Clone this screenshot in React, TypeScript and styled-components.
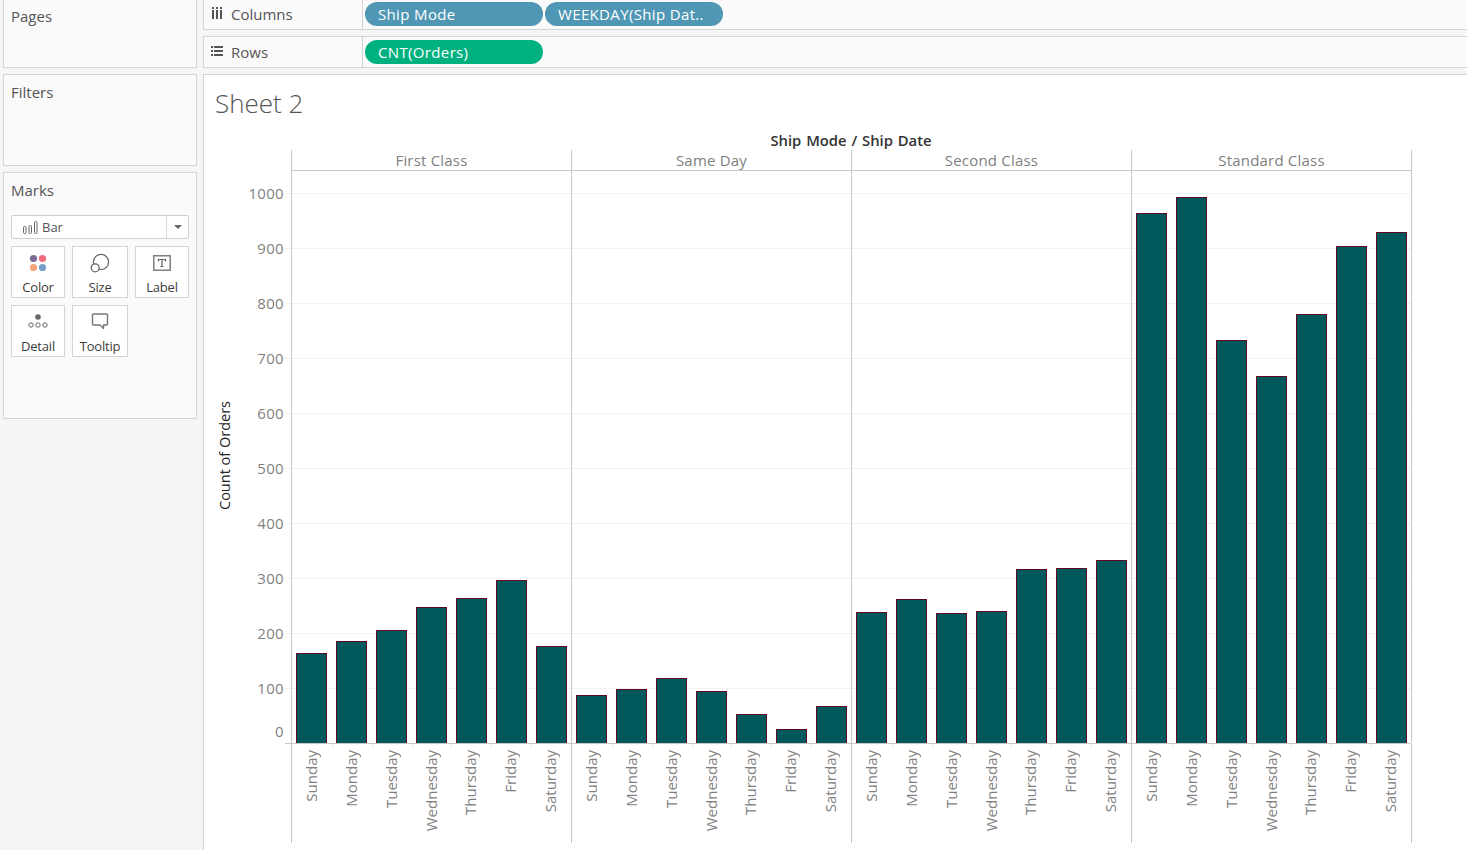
import React from "react";
import styled, { createGlobalStyle } from "styled-components";

const GlobalStyle = createGlobalStyle`
  html, body {
    margin: 0;
    padding: 0;
    height: 850px;
    overflow: hidden;
    background: #f5f5f5;
    font-family: "Open Sans", "Liberation Sans", sans-serif;
  }
`;

const Page = styled.div`
  display: grid;
  grid-template-columns: 194px 1fr;
  column-gap: 6px;
  width: 1467px;
  height: 850px;
  padding-left: 3px;
  box-sizing: border-box;
  overflow: hidden;
`;

const Side = styled.div`
  display: flex;
  flex-direction: column;
  gap: 6px;
  margin-top: -2px;
`;

const Card = styled.div<{ $h: number }>`
  height: ${(p) => p.$h}px;
  box-sizing: border-box;
  background: #fafafa;
  border: 1px solid #d4d4d4;
  padding: 7px 7px;
  font-size: 15px;
  line-height: 20px;
  color: #555;
`;

const MarkSelect = styled.div`
  display: flex;
  align-items: center;
  height: 24px;
  margin-top: 15px;
  box-sizing: border-box;
  background: #fff;
  border: 1px solid #cfcfcf;
  border-radius: 2px;
  font-size: 13px;
`;

const MarkName = styled.div`
  flex: 1;
  display: flex;
  align-items: center;
  gap: 4px;
  padding-left: 11px;
  border-right: 1px solid #d8d8d8;
  height: 100%;
`;

const Caret = styled.div`
  width: 21px;
  display: flex;
  justify-content: center;
  &::after {
    content: "";
    border-left: 4px solid transparent;
    border-right: 4px solid transparent;
    border-top: 4px solid #666;
  }
`;

const MarkGrid = styled.div`
  display: grid;
  grid-template-columns: 54px 56px 54px;
  grid-auto-rows: 52px;
  column-gap: 7px;
  row-gap: 7px;
  margin-top: 7px;
`;

const MarkButton = styled.div`
  display: flex;
  flex-direction: column;
  align-items: center;
  box-sizing: border-box;
  background: #fff;
  border: 1px solid #d4d4d4;
  font-size: 13px;
  line-height: 18px;
  color: #3c3c3c;
  letter-spacing: -0.2px;
`;

const IconSlot = styled.div`
  height: 31px;
  display: flex;
  align-items: center;
  justify-content: center;
`;

const Main = styled.div`
  display: flex;
  flex-direction: column;
  gap: 6px;
  margin-top: -2px;
  min-width: 0;
`;

const Shelf = styled.div<{ $h: number }>`
  display: flex;
  height: ${(p) => p.$h}px;
  box-sizing: border-box;
  background: #fafafa;
  border: 1px solid #d4d4d4;
  border-right: none;
`;

const ShelfLabel = styled.div`
  width: 159px;
  flex: none;
  display: flex;
  align-items: center;
  gap: 8px;
  box-sizing: border-box;
  padding: 0 0 0 7px;
  border-right: 1px solid #d4d4d4;
  font-size: 15px;
  color: #555;
`;

const ShelfIcon = styled.svg`
  width: 12px;
  height: 12px;
  margin-top: -3px;
`;

const Pills = styled.div`
  display: flex;
  align-items: center;
  gap: 2px;
  padding-left: 2px;
`;

const Pill = styled.div<{ $bg: string }>`
  width: 178px;
  height: 24px;
  box-sizing: border-box;
  padding-left: 13px;
  border-radius: 12px;
  background: ${(p) => p.$bg};
  color: #fff;
  font-size: 15px;
  letter-spacing: 0.35px;
  line-height: 24px;
  white-space: nowrap;
`;

const View = styled.div`
  flex: 1;
  display: flex;
  flex-direction: column;
  box-sizing: border-box;
  background: #fff;
  border: 1px solid #d4d4d4;
  border-right: none;
  border-bottom: none;
`;

const Title = styled.div`
  padding: 10px 0 0 11px;
  height: 47px;
  box-sizing: border-box;
  font-size: 26px;
  line-height: 36px;
  font-weight: 300;
  color: #555;
`;

const Chart = styled.div`
  display: grid;
  grid-template-columns: 87px 1120px;
  grid-template-rows: 28px 21px 573px 99px;
`;

const AxisTitleSlot = styled.div`
  display: flex;
  justify-content: center;
  align-items: center;
  width: 40px;
  height: 100%;
  padding-bottom: 4px;
  box-sizing: border-box;
`;

const AxisTitle = styled.div`
  transform: rotate(-90deg);
  white-space: nowrap;
  font-size: 14.5px;
  font-weight: 500;
  color: #222;
`;

const ChartTitle = styled.div`
  grid-column: 2;
  grid-row: 1;
  text-align: center;
  padding-top: 8px;
  font-size: 14.8px;
  line-height: 20px;
  font-weight: 600;
  color: #333;
  word-spacing: 1px;
`;

const Headers = styled.div`
  grid-column: 2;
  grid-row: 2;
  display: grid;
  grid-template-columns: repeat(4, 280px);
  border-bottom: 1px solid #c8c8c8;
`;

const HeaderCell = styled.div`
  border-left: 1px solid #c8c8c8;
  text-align: center;
  font-size: 15px;
  letter-spacing: 0.2px;
  line-height: 21px;
  color: #7f7f7f;
  &:last-child {
    border-right: 1px solid #c8c8c8;
    margin-right: -1px;
  }
`;

const AxisColumn = styled.div`
  grid-column: 1;
  grid-row: 3;
  position: relative;
`;

const Tick = styled.div<{ $y: number }>`
  position: absolute;
  right: 7px;
  top: ${(p) => p.$y - 10}px;
  font-size: 15px;
  letter-spacing: 0.3px;
  line-height: 20px;
  color: #7f7f7f;
`;

const TickMark = styled.div<{ $y: number; $base?: boolean }>`
  position: absolute;
  right: 0;
  top: ${(p) => p.$y}px;
  width: 6px;
  height: 1px;
  background: ${(p) => (p.$base ? "#c8c8c8" : "#f2f2f2")};
`;

const Plot = styled.div`
  grid-column: 2;
  grid-row: 3;
  display: grid;
  grid-template-columns: repeat(4, 280px);
  border-bottom: 1px solid #c8c8c8;
  background-image: repeating-linear-gradient(
    to bottom,
    transparent 0,
    transparent 22px,
    #f2f2f2 22px,
    #f2f2f2 23px,
    transparent 23px,
    transparent 55px
  );
`;

const Pane = styled.div`
  display: flex;
  align-items: flex-end;
  gap: 9px;
  padding-left: 4px;
  border-left: 1px solid #c8c8c8;
  &:last-child {
    border-right: 1px solid #c8c8c8;
    margin-right: -1px;
  }
`;

const Bar = styled.div`
  width: 31px;
  box-sizing: border-box;
  background: #00575c;
  border: 1px solid #5c0a26;
  border-bottom: none;
`;

const DayRow = styled.div`
  grid-column: 2;
  grid-row: 4;
  display: grid;
  grid-template-columns: repeat(4, 280px);
`;

const DayPane = styled.div`
  display: flex;
  border-left: 1px solid #c8c8c8;
  &:last-child {
    border-right: 1px solid #c8c8c8;
    margin-right: -1px;
  }
`;

const DayCell = styled.div`
  position: relative;
  width: 40px;
  height: 99px;
  display: flex;
  justify-content: center;
  padding: 6px 2px 0 0;
  box-sizing: border-box;
  &:not(:first-child)::before {
    content: "";
    position: absolute;
    left: 0;
    top: 0;
    width: 1px;
    height: 4px;
    background: #e8e8e8;
  }
`;

const DayLabel = styled.div`
  writing-mode: vertical-rl;
  transform: rotate(180deg);
  height: fit-content;
  font-size: 15px;
  line-height: 20px;
  color: #7f7f7f;
`;

const days = ["Sunday", "Monday", "Tuesday", "Wednesday", "Thursday", "Friday", "Saturday"];
const panes = [
  { name: "First Class", tops: [653, 641, 630, 607, 598, 580, 646] },
  { name: "Same Day", tops: [695, 689, 678, 691, 714, 729, 706] },
  { name: "Second Class", tops: [612, 599, 613, 611, 569, 568, 560] },
  { name: "Standard Class", tops: [213, 197, 340, 376, 314, 246, 232] },
];
const ticks = [1000, 900, 800, 700, 600, 500, 400, 300, 200, 100, 0];
const BASELINE = 743;

// the 0 label sits above the axis line, the others are centred on their grid line
const tickY = (t: number) => (t === 0 ? 560 : (1000 - t) * 0.55 + 22);

const BarsIcon = () => (
  <svg width="15" height="13" viewBox="0 0 15 13" fill="none" stroke="#666">
    <rect x="0.5" y="5.5" width="2.5" height="7" rx="1" />
    <rect x="6" y="4.5" width="2.5" height="8" rx="1" />
    <rect x="11.5" y="0.5" width="2.5" height="12" rx="1" />
  </svg>
);

const ColorIcon = () => (
  <svg width="18" height="18" viewBox="0 0 18 18">
    <circle cx="4.5" cy="4.5" r="3.6" fill="#7b6a92" />
    <circle cx="13.5" cy="4.5" r="3.6" fill="#ee6a7a" />
    <circle cx="4.5" cy="13.5" r="3.6" fill="#f2a578" />
    <circle cx="13.5" cy="13.5" r="3.6" fill="#739fca" />
  </svg>
);

const SizeIcon = () => (
  <svg width="20" height="20" viewBox="0 0 20 20" fill="none" stroke="#666" strokeWidth="1.3">
    <circle cx="11" cy="9" r="7.6" />
    <circle cx="5.2" cy="14.8" r="4" fill="#fff" />
  </svg>
);

const LabelIcon = () => (
  <svg width="18" height="16" viewBox="0 0 18 16" fill="none">
    <rect x="0.75" y="0.75" width="16.5" height="14.5" stroke="#808080" strokeWidth="1.5" />
    <path d="M5.5 6.5v-2h7v2M9 4.5v7M7.5 11.5h3" stroke="#666" strokeWidth="1.2" />
  </svg>
);

const DetailIcon = () => (
  <svg width="20" height="17" viewBox="0 0 20 17" fill="none" stroke="#666">
    <circle cx="10" cy="4" r="2.8" fill="#666" stroke="none" />
    <circle cx="3" cy="12" r="2.2" />
    <circle cx="10" cy="12" r="2.2" />
    <circle cx="17" cy="12" r="2.2" />
  </svg>
);

const TooltipIcon = () => (
  <svg width="18" height="17" viewBox="0 0 18 17" fill="none" stroke="#777" strokeWidth="1.4" strokeLinejoin="round">
    <path d="M2.5 1h13a1 1 0 0 1 1 1v9a1 1 0 0 1-1 1h-3v3.5l-3.5-3.5h-6.5a1 1 0 0 1-1-1v-9a1 1 0 0 1 1-1z" />
  </svg>
);

export default function App() {
  return (
    <Page>
      <GlobalStyle />
      <Side>
        <Card $h={70}>Pages</Card>
        <Card $h={92}>Filters</Card>
        <Card $h={247}>
          Marks
          <MarkSelect>
            <MarkName>
              <BarsIcon />
              Bar
            </MarkName>
            <Caret />
          </MarkSelect>
          <MarkGrid>
            <MarkButton>
              <IconSlot>
                <ColorIcon />
              </IconSlot>
              Color
            </MarkButton>
            <MarkButton>
              <IconSlot>
                <SizeIcon />
              </IconSlot>
              Size
            </MarkButton>
            <MarkButton>
              <IconSlot>
                <LabelIcon />
              </IconSlot>
              Label
            </MarkButton>
            <MarkButton>
              <IconSlot>
                <DetailIcon />
              </IconSlot>
              Detail
            </MarkButton>
            <MarkButton>
              <IconSlot>
                <TooltipIcon />
              </IconSlot>
              Tooltip
            </MarkButton>
          </MarkGrid>
        </Card>
      </Side>
      <Main>
        <Shelf $h={32}>
          <ShelfLabel>
            <ShelfIcon viewBox="0 0 12 12" fill="#555">
              <rect x="1" y="0" width="2" height="2" />
              <rect x="1" y="3" width="2" height="9" />
              <rect x="5" y="0" width="2" height="2" />
              <rect x="5" y="3" width="2" height="9" />
              <rect x="9" y="0" width="2" height="2" />
              <rect x="9" y="3" width="2" height="9" />
            </ShelfIcon>
            Columns
          </ShelfLabel>
          <Pills>
            <Pill $bg="#4f97b4">Ship Mode</Pill>
            <Pill $bg="#4f97b4">WEEKDAY(Ship Dat..</Pill>
          </Pills>
        </Shelf>
        <Shelf $h={32}>
          <ShelfLabel>
            <ShelfIcon viewBox="0 0 12 12" fill="#555">
              <rect x="0" y="1" width="2" height="2" />
              <rect x="3" y="1" width="9" height="2" />
              <rect x="0" y="5" width="2" height="2" />
              <rect x="3" y="5" width="9" height="2" />
              <rect x="0" y="9" width="2" height="2" />
              <rect x="3" y="9" width="9" height="2" />
            </ShelfIcon>
            Rows
          </ShelfLabel>
          <Pills>
            <Pill $bg="#00b180">CNT(Orders)</Pill>
          </Pills>
        </Shelf>
        <View>
          <Title>Sheet 2</Title>
          <Chart>
            <ChartTitle>Ship Mode / Ship Date</ChartTitle>
            <Headers>
              {panes.map((p) => (
                <HeaderCell key={p.name}>{p.name}</HeaderCell>
              ))}
            </Headers>
            <AxisColumn>
              {ticks.map((t) => (
                <Tick key={t} $y={tickY(t)}>
                  {t}
                </Tick>
              ))}
              {ticks.map((t) => (
                <TickMark key={t} $y={(1000 - t) * 0.55 + 22} $base={t === 0} />
              ))}
              <AxisTitleSlot>
                <AxisTitle>Count of Orders</AxisTitle>
              </AxisTitleSlot>
            </AxisColumn>
            <Plot>
              {panes.map((p) => (
                <Pane key={p.name}>
                  {p.tops.map((top, i) => (
                    <Bar key={i} style={{ height: BASELINE - top }} />
                  ))}
                </Pane>
              ))}
            </Plot>
            <DayRow>
              {panes.map((p) => (
                <DayPane key={p.name}>
                  {days.map((d) => (
                    <DayCell key={d}>
                      <DayLabel>{d}</DayLabel>
                    </DayCell>
                  ))}
                </DayPane>
              ))}
            </DayRow>
          </Chart>
        </View>
      </Main>
    </Page>
  );
}
